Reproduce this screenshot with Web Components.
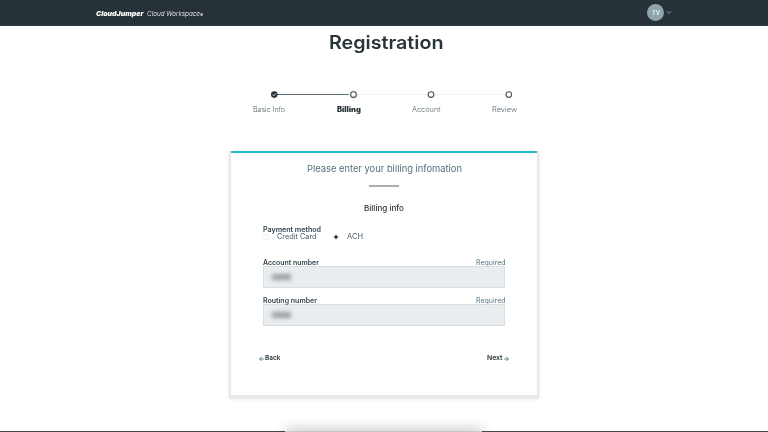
<!DOCTYPE html>
<html lang="en">
<head>
<meta charset="utf-8">
<title>Registration</title>
<style>
html,body{margin:0;height:100%;overflow:hidden;background:#fff}
body{font-family:Inter,"Liberation Sans",sans-serif;color:#263238}
</style>
</head>
<body>
<registration-page></registration-page>
<script>
const define = (name, html, after) => {
  const t = document.createElement('template');
  t.innerHTML = html;
  customElements.define(name, class extends HTMLElement {
    connectedCallback() {
      if (this.shadowRoot) return;
      this.attachShadow({mode: 'open'}).append(t.content.cloneNode(true));
      if (after) after(this, this.shadowRoot);
    }
  });
};

// Text stretched to an exact width: <fit-text w="40">label</fit-text>
define('fit-text', `<style>:host{display:block;white-space:nowrap;line-height:10px;font-size:7.2px;flex:none}span{display:inline-block;transform-origin:0 50%;opacity:.99}</style><span><slot></slot></span>`,
(el, root) => {
  const w = +el.getAttribute('w'), span = root.querySelector('span');
  el.style.width = w + 'px';
  span.style.transform = `translateY(var(--drop,.6px)) scaleX(${w / span.getBoundingClientRect().width})`;
});

define('app-header', `<style>
:host{display:flex;box-sizing:border-box;height:26px;background:#263238;padding:0 96px;align-items:center;color:#fff;border-bottom:1px solid #2e393f}
.logo{display:flex;gap:3.5px;font-style:italic;flex:1;align-items:center;padding-top:1px}
.logo fit-text{font-size:6.8px}
.a{font-weight:900}.b{font-weight:300}
.logo .r{font-size:5px;font-weight:700;margin-left:-3.5px;padding-top:1px}
.user{display:flex;align-items:center;gap:2px}
.av{width:17px;height:17px;border-radius:50%;background:#90a4ae;display:flex;align-items:center;justify-content:center}
.av fit-text{font-size:5.5px;font-weight:600;color:#eef2f4;--drop:0px}
</style>
<div class="logo"><fit-text class="a" w="47.5">CloudJumper</fit-text><fit-text class="b" w="53">Cloud Workspace</fit-text><fit-text class="r" w="3">®</fit-text></div>
<div class="user"><div class="av"><fit-text w="8">TV</fit-text></div><svg width="6" height="5" viewBox="0 0 6 5"><path d="M.8 1.2 3 3.5 5.2 1.2" fill="none" stroke="#90a4ae" stroke-width=".9"/></svg></div>`);

define('progress-steps', `<style>
:host{display:block;padding-top:36.5px;width:270px;margin-left:250px}
svg{display:block}
.labels{display:flex;padding:4px 0 0 3.3px;color:#54666f;font-weight:300}
.labels .on{font-weight:900;color:#263238;margin:0 51.5px 0 51.5px}
.last{margin-left:51px}
</style>
<svg width="270" height="10" viewBox="250 90 270 10" fill="none">
<path d="M353 94.5H509" stroke="#f1f3f4"/><path d="M274 94.5H351" stroke="#5c6b73"/>
<circle cx="274.3" cy="94.6" r="3.3" fill="#263238"/><path d="m272.7 94.7 1.2 1.1 2-2.3" stroke="#fff" stroke-width=".8"/>
<circle cx="353.5" cy="94.6" r="4.7" fill="#e7ecee"/>
<g fill="#fff" stroke="#46555d" stroke-width="1.1"><circle cx="353.5" cy="94.6" r="2.8"/><circle cx="431" cy="94.6" r="2.8"/><circle cx="508.8" cy="94.6" r="2.8"/></g>
</svg>
<div class="labels"><fit-text w="32">Basic Info</fit-text><fit-text class="on" w="24">Billing</fit-text><fit-text w="28.5">Account</fit-text><fit-text class="last" w="25">Review</fit-text></div>`);

define('radio-option', `<style>
:host{display:flex;align-items:center;gap:8px;color:#455a64;--drop:.2px}
i{box-sizing:border-box;width:6px;height:6px;border:1px solid #eff1f2;border-radius:50%;background:#fff}
:host([checked]) i{border-color:#dfe2e4;background:radial-gradient(circle,#111 0 1.2px,#fff 2px)}
</style><i></i><slot></slot>`);

define('blurred-field', `<style>
:host{display:block;width:242px}
.top{display:flex;justify-content:space-between;height:9px}
.req{color:#557280}
.box{box-sizing:border-box;height:22px;border:1px solid #d9dee0;border-radius:1px;background:#e9edf0;display:flex;align-items:center;padding-left:8px}
i{width:19px;height:6px;background:#7d8285;filter:blur(2px);opacity:.72}
</style><div class="top"><slot></slot><fit-text class="req" w="29.5">Required</fit-text></div><div class="box"><i></i></div>`);

define('billing-card', `<style>
:host{display:block;box-sizing:border-box;width:306px;height:244px;margin:37px 0 0 231px;background:#fff;border-top:2px solid #26bccb;box-shadow:0 2px 1px 2px #e9e9e9,0 2px 3px 3px #f1f1f1;clip-path:inset(0 -8px -10px -8px)}
.head{display:flex;flex-direction:column;align-items:center}
.lead{font-size:9.3px;line-height:12px;color:#546e7a;margin-top:10px;--drop:.2px}
.rule{width:30px;height:2px;background:#a9b0b4;margin-top:10px}
.sub{font-size:7.7px;font-weight:500;margin-top:16px}
form{display:flex;flex-direction:column;padding-left:32px;margin-top:11px}
.lab{font-weight:600;color:#2f3f47}
.radios{display:flex;gap:16px;margin-top:-2px}
.f1{margin-top:15px}.f2{margin-top:7px}
.nav{display:flex;justify-content:space-between;align-items:center;padding:0 28px;margin-top:27px;font-weight:600}
.nav div{display:flex;gap:1.2px;align-items:center}
.nav fit-text{font-size:6.6px;--drop:.4px}
svg{fill:none;stroke:#546e7a;stroke-width:.9;margin-top:1px}
</style>
<div class="head"><fit-text class="lead" w="155">Please enter your billing infomation</fit-text><div class="rule"></div><fit-text class="sub" w="40">Billing info</fit-text></div>
<form><fit-text class="lab" w="58">Payment method</fit-text>
<div class="radios"><radio-option><fit-text w="39.5">Credit Card</fit-text></radio-option><radio-option checked><fit-text w="16">ACH</fit-text></radio-option></div>
<blurred-field class="f1"><fit-text class="lab" w="56">Account number</fit-text></blurred-field>
<blurred-field class="f2"><fit-text class="lab" w="54">Routing number</fit-text></blurred-field></form>
<div class="nav"><div><svg width="5" height="6" viewBox="0 0 5 6"><path d="M4.8 3H.7M2.6 1 .7 3l1.9 2"/></svg><fit-text w="15.5">Back</fit-text></div><div><fit-text w="15.5">Next</fit-text><svg width="5" height="6" viewBox="0 0 5 6"><path d="M.2 3h4.1M2.4 1l1.9 2-1.9 2"/></svg></div></div>`);

define('screen-edge', `<style>
:host{position:absolute;left:0;right:0;bottom:0;height:22px;overflow:hidden}
.glow{position:absolute;left:286px;width:196px;top:18px;height:20px;background:#00000030;filter:blur(6px)}
.bar{position:absolute;left:0;right:0;bottom:0;height:1px;background:linear-gradient(90deg,#4c4649 0 285px,#ccc8c8 285px 482px,#4c4649 482px)}
</style><div class="glow"></div><div class="bar"></div>`);

define('registration-page', `<style>
:host{display:block;position:relative;width:768px;height:432px;background:#fff;overflow:hidden}
.title{font-size:18.4px;line-height:24px;font-weight:600;margin:3.5px 0 0 328.8px;--drop:0px}
</style><app-header></app-header><fit-text class="title" w="114.5">Registration</fit-text><progress-steps></progress-steps><billing-card></billing-card><screen-edge></screen-edge>`);
</script>
</body>
</html>
